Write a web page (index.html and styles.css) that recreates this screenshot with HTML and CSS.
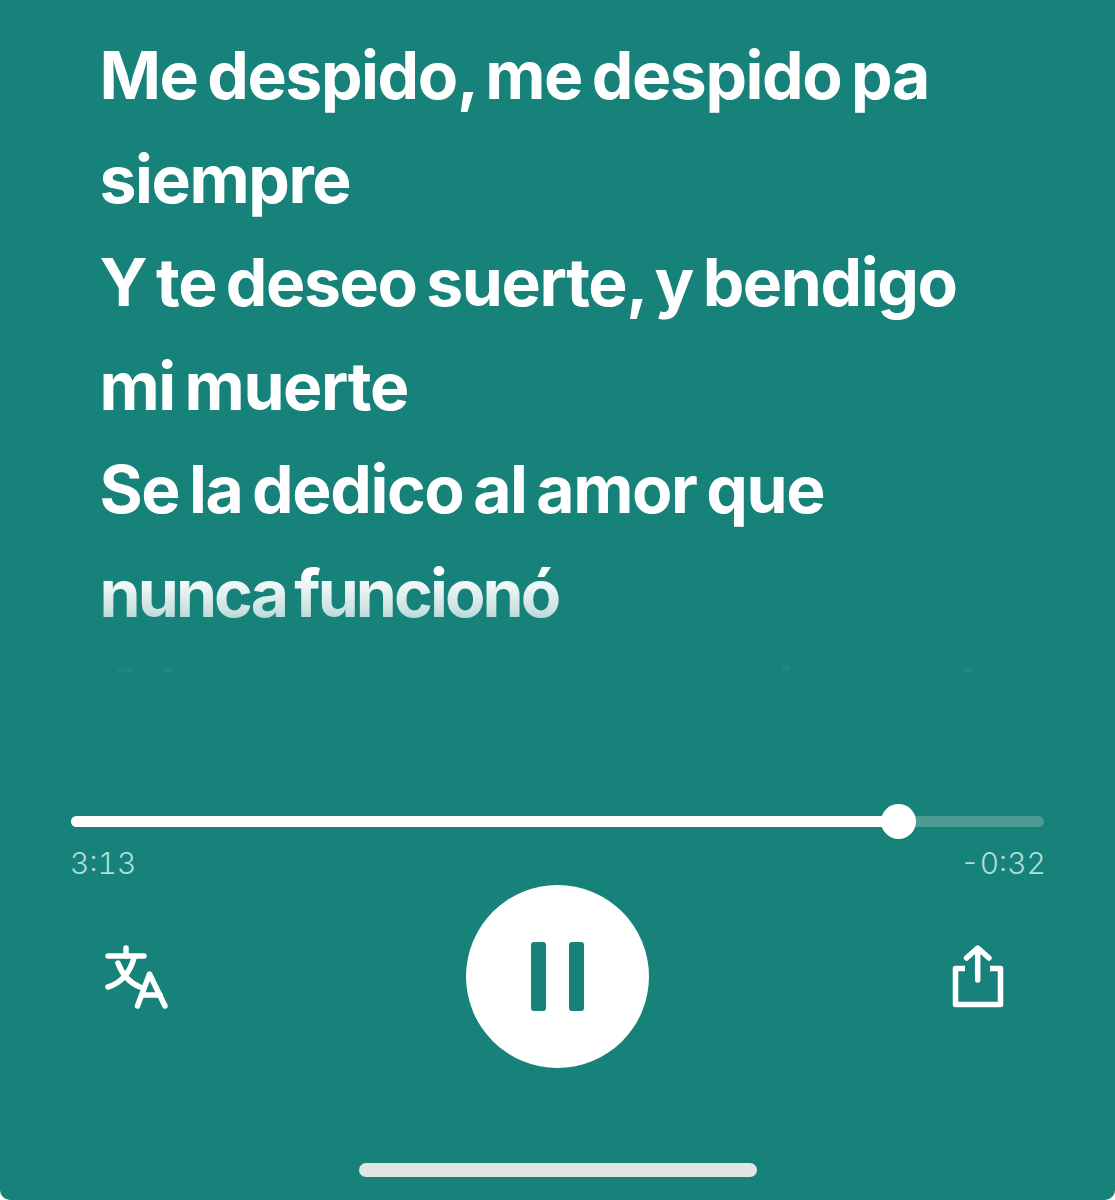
FILE: index.html
```html
<!DOCTYPE html>
<html lang="es">
<head>
<meta charset="UTF-8" />
<title>Letra</title>
<link rel="stylesheet" href="styles.css">
</head>
<body>

  <div class="player">
    <div class="lyrics">
      <p class="line">Me despido, me despido pa siempre</p>
      <p class="line">Y te deseo suerte, y bendigo mi muerte</p>
      <p class="line">Se la dedico al amor que <span class="line-tight">nunca funcionó</span></p>
      <div class="lyrics-fade"></div>
      <div class="trace trace-a"></div>
      <div class="trace trace-b"></div>
      <div class="trace trace-c"></div>
      <div class="trace trace-d"></div>
    </div>

    <div class="progress">
      <div class="progress-track">
        <div class="progress-done"></div>
        <div class="progress-thumb"></div>
      </div>
      <div class="progress-times">
        <span>3:13</span>
        <span>-0:32</span>
      </div>
    </div>

    <div class="controls">
      <svg class="icon-translate" width="75" height="72" viewBox="0 0 75 72" fill="none" stroke="#fff" stroke-width="5.5" stroke-linecap="round" stroke-linejoin="round">
        <path d="M8 15H44" />
        <path d="M26 7V15" />
        <path d="M18 22C22 33 30 42 40 46" />
        <path d="M34 17C30 31 21 42 8 46" />
        <path d="M37.5 65L49.5 33L65 65" />
        <path d="M42 54H60" />
      </svg>
      <button class="pause" aria-label="Pausa">
        <span class="pause-bar"></span>
        <span class="pause-bar"></span>
      </button>
      <svg class="icon-share" width="65" height="72" viewBox="0 0 65 72" fill="none" stroke="#fff" stroke-width="5.5" stroke-linecap="round">
        <path stroke-linecap="butt" stroke-linejoin="round" d="M20 27.5H10.5V63.5H55.5V27.5H45" />
        <path d="M32.7 9V39" />
        <path stroke-linejoin="round" d="M21.5 17L32.7 7L44 17" />
      </svg>
    </div>

    <div class="home-bar"></div>
  </div>

</body>
</html>
```

FILE: styles.css
```css
html, body {
  margin: 0;
  padding: 0;
  background: #fff;
}

.player {
  display: flex;
  flex-direction: column;
  height: 1200px;
  overflow: hidden;
  border-radius: 0 0 10px 10px;
  background: #16827a;
  font-family: Inter, 'Noto Sans', sans-serif;
  color: #fff;
}

.lyrics {
  position: relative;
  height: 816px;
  box-sizing: border-box;
  padding: 24px 100px 0 99.5px;
}

.line {
  margin: 0;
  font-size: 66px;
  font-weight: 700;
  line-height: 103.5px;
  letter-spacing: -1.4px;
  word-spacing: -4.5px;
}

.line-tight {
  letter-spacing: -2.9px;
}

.lyrics-fade {
  position: absolute;
  left: 0;
  right: 0;
  top: 575px;
  height: 95px;
  background: linear-gradient(to bottom, rgba(22,130,122,0) 0%, rgba(22,130,122,0.25) 40%, #16827a 100%);
}

.trace {
  position: absolute;
  top: 667px;
  height: 6px;
  background: rgba(255,255,255,0.04);
}

.trace-a { left: 117px; width: 15px; }
.trace-b { left: 163px; width: 9px; }
.trace-c { left: 782px; width: 8px; top: 665px; }
.trace-d { left: 963px; width: 10px; }

.progress {
  padding: 0 71px 0 71px;
}

.progress-track {
  position: relative;
  height: 11px;
  border-radius: 6px;
  background: #4c9c96;
}

.progress-done {
  width: 827px;
  height: 11px;
  border-radius: 6px;
  background: #fff;
}

.progress-thumb {
  position: absolute;
  left: 810px;
  top: -12px;
  width: 35px;
  height: 35px;
  border-radius: 50%;
  background: #fff;
}

.progress-times {
  display: flex;
  justify-content: space-between;
  margin: 18px -2px 0 -1px;
  font-size: 30px;
  font-weight: 300;
  font-variant-numeric: tabular-nums;
  line-height: 36px;
  color: #acdfd9;
}

.controls {
  display: grid;
  grid-template-columns: 1fr 183px 1fr;
  align-items: center;
  margin-top: 4px;
}

.icon-translate {
  justify-self: start;
  margin-left: 100px;
}

.icon-share {
  justify-self: end;
  margin-right: 105px;
}

.pause {
  display: flex;
  justify-content: center;
  gap: 23px;
  align-items: center;
  width: 183px;
  height: 183px;
  padding: 0;
  border: none;
  border-radius: 50%;
  background: #fff;
}

.pause-bar {
  width: 15px;
  height: 69px;
  border-radius: 3px;
  background: #16827a;
}

.home-bar {
  width: 398px;
  height: 14px;
  margin: 95px auto 0;
  border-radius: 7px;
  background: #e4e4e4;
}
```
